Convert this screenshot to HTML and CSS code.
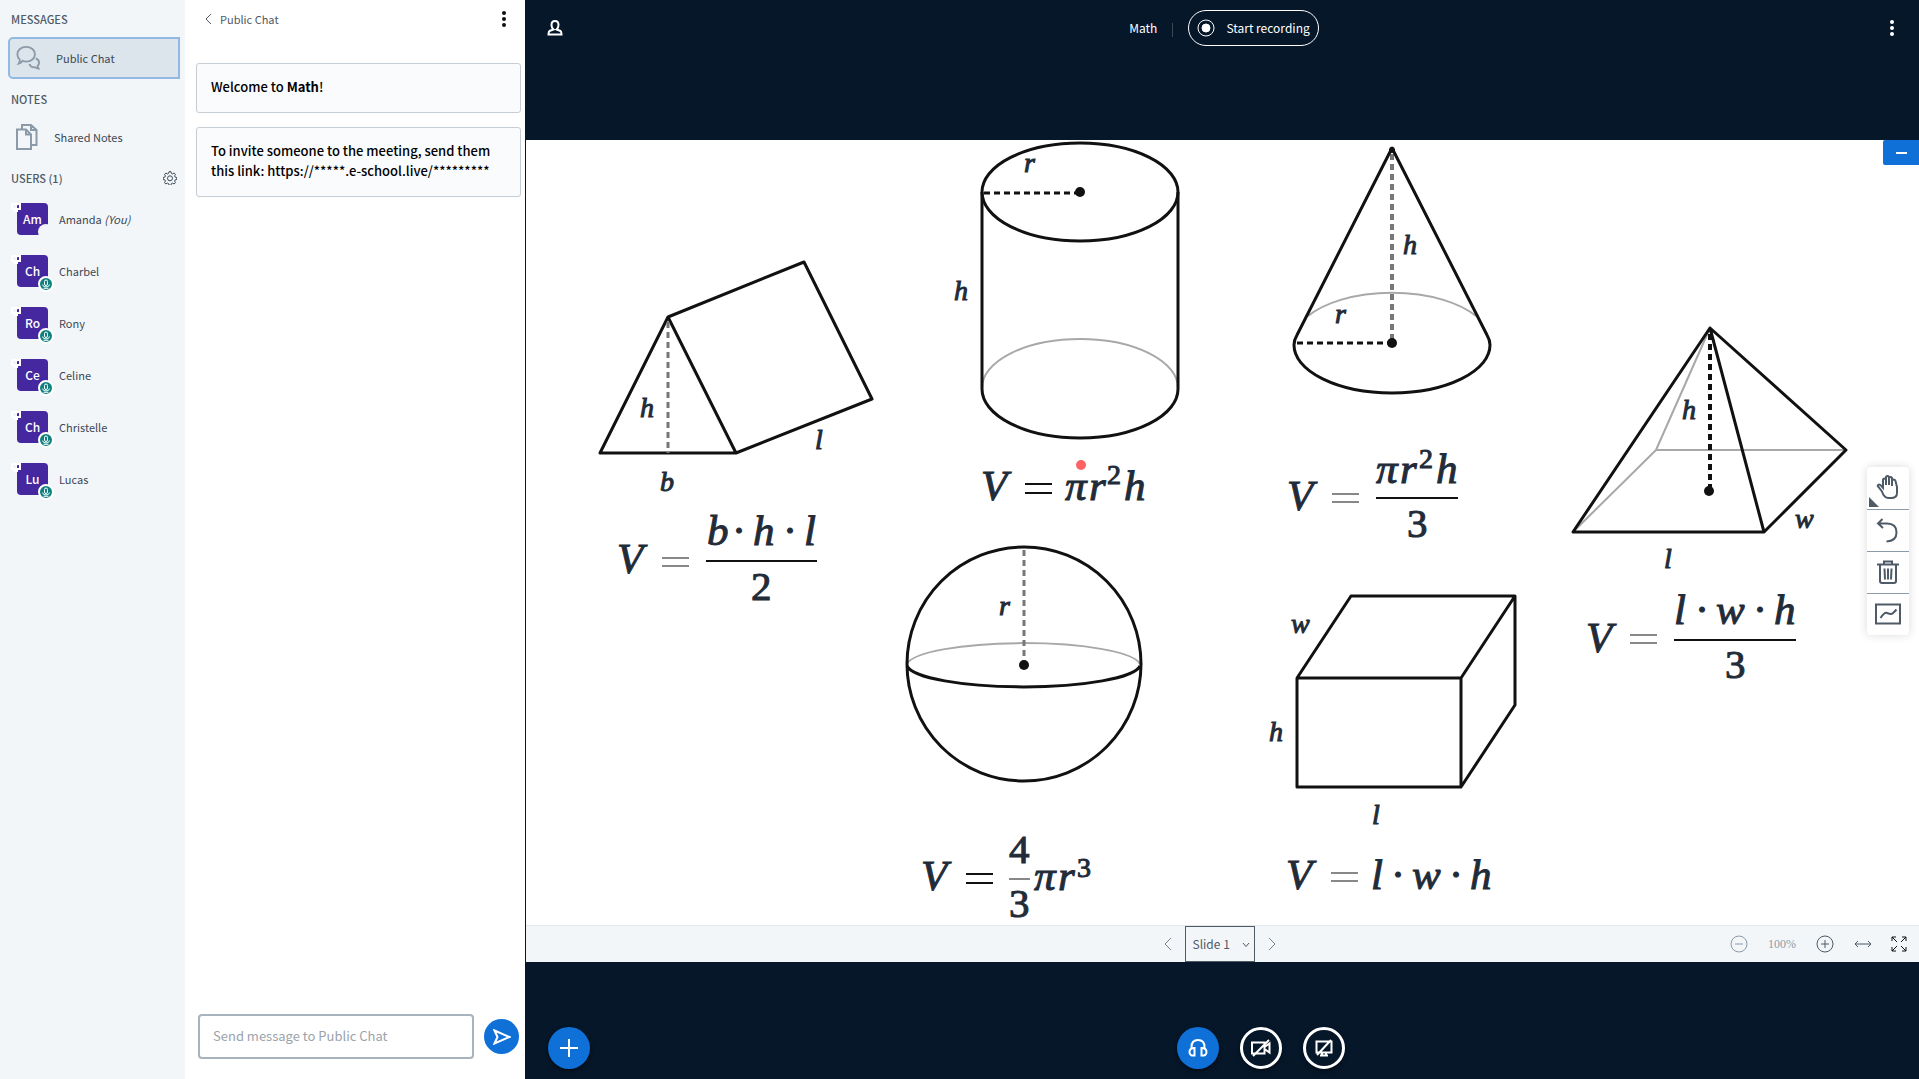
FILE: index.html
```html
<!DOCTYPE html>
<html lang="en">
<head>
  <meta charset="UTF-8">
  <meta name="viewport" content="width=device-width, initial-scale=1.0">
  <title>Math</title>
  <link rel="stylesheet" href="styles.css">
</head>
<body>
  <svg width="0" height="0" class="defs" aria-hidden="true">
    <symbol id="mic" viewBox="0 0 12 12">
      <path d="M4.500 6V3.500Q4.500 2 6 2t1.500 1.500V6Q7.500 7.500 6 7.500T4.500 6zM2.500 6.500Q3 9 6 9t3.500-2.500M3.500 10.300h5"/>
    </symbol>
    <symbol id="screen" viewBox="0 0 10 9">
      <path d="M1 1h8v5H1zM3 8h4"/>
    </symbol>
    <symbol id="dots" viewBox="0 0 6 18">
      <circle cx="3" cy="3" r="2"/><circle cx="3" cy="9" r="2"/><circle cx="3" cy="15" r="2"/>
    </symbol>
  </svg>

  <aside class="sidebar">
    <h2>Messages</h2>
    <button class="side-item active">
      <svg width="26" height="26" viewBox="0 0 26 26">
        <path d="M11 1c5.500 0 9.500 3.500 9.500 8s-4 8-9.500 8q-2 0-4-.8Q5.500 18.500 3 19q1.500-2 1-4.500Q1.500 12.500 1.500 9c0-4.500 4-8 9.500-8z"/>
        <path d="M21.500 13.500q3.500 1.500 3.500 4.500 0 2-1.500 3.500 0 2 1 3-2.500 0-3.500-1.500-5 .8-6.500-3.500"/>
      </svg>
      Public Chat
    </button>
    <h2>Notes</h2>
    <button class="side-item">
      <svg width="24" height="26" viewBox="0 0 24 26">
        <path d="M1 5.500h9l5 5V25H1zM10 5.500v5h5M6 5.500V1h9l5.500 5v15H15M15 1v5h5.500"/>
      </svg>
      Shared Notes
    </button>
    <div class="users-head">
      <h2>Users (1)</h2>
      <button class="icon-btn" aria-label="Manage users">
        <svg width="14" height="14" viewBox="0 0 14 14">
          <path d="M6 .7h2l.4 1.700 1.200.5 1.500-.9 1.400 1.400-.9 1.500.5 1.200 1.700.4v2l-1.700.4-.5 1.200.9 1.500-1.400 1.400-1.500-.9-1.200.5-.4 1.700H6l-.4-1.700-1.200-.5-1.500.9-1.400-1.400.9-1.500-.5-1.200L.2 8.500v-2l1.700-.4.5-1.200-.9-1.500L2.900 2l1.500.9 1.200-.5z"/>
          <circle cx="7" cy="7.300" r="2.500"/>
        </svg>
      </button>
    </div>
    <ul class="users">
      <li><span class="avatar">Am<svg class="presenter"><use href="#screen"/></svg><i class="notch"></i></span>Amanda&nbsp;<em>(You)</em></li>
      <li><span class="avatar">Ch<svg class="presenter"><use href="#screen"/></svg><svg class="voice"><use href="#mic"/></svg></span>Charbel</li>
      <li><span class="avatar">Ro<svg class="presenter"><use href="#screen"/></svg><svg class="voice"><use href="#mic"/></svg></span>Rony</li>
      <li><span class="avatar">Ce<svg class="presenter"><use href="#screen"/></svg><svg class="voice"><use href="#mic"/></svg></span>Celine</li>
      <li><span class="avatar">Ch<svg class="presenter"><use href="#screen"/></svg><svg class="voice"><use href="#mic"/></svg></span>Christelle</li>
      <li><span class="avatar">Lu<svg class="presenter"><use href="#screen"/></svg><svg class="voice"><use href="#mic"/></svg></span>Lucas</li>
    </ul>
  </aside>

  <section class="chat">
    <header>
      <button class="back">
        <svg width="7" height="12" viewBox="0 0 7 12"><path d="M6 1L1 6l5 5"/></svg>
        Public Chat
      </button>
      <button class="icon-btn" aria-label="Chat options"><svg class="dots" width="6" height="18"><use href="#dots"/></svg></button>
    </header>
    <div class="messages">
      <p>Welcome to <b>Math</b>!</p>
      <p>To invite someone to the meeting, send them this link: https://*****.e-school.live/*********</p>
    </div>
    <form class="composer">
      <input type="text" aria-label="Message" placeholder="Send message to Public Chat">
      <button type="submit" class="round send" aria-label="Send">
        <svg width="18" height="16" viewBox="0 0 18 16"><path d="M1.500 1.500L16.500 8l-15 6.500L4.500 8z"/></svg>
      </button>
    </form>
  </section>

  <main>
    <nav class="topbar">
      <button class="icon-btn" aria-label="Toggle user list">
        <svg width="16" height="18" viewBox="0 0 16 18"><path d="M8 2q3.500 0 3.500 4 0 3-2 4.500l4 1.500q1 .8 1 3.500h-13q0-2.700 1-3.500l4-1.500Q4.500 9 4.500 6q0-4 3.500-4z"/></svg>
      </button>
      <div class="title">
        <span class="room">Math</span>
        <button class="record">
          <svg width="18" height="18" viewBox="0 0 18 18"><circle cx="9" cy="9" r="8"/><circle class="fill" cx="9" cy="9" r="4"/></svg>
          Start recording
        </button>
      </div>
      <button class="icon-btn" aria-label="Options"><svg class="dots" width="6" height="18"><use href="#dots"/></svg></button>
    </nav>

    <div class="presentation">
      <svg class="slide" viewBox="526 140 1393 785" preserveAspectRatio="xMidYMid meet">
        <!-- prism -->
        <g class="shape">
          <path d="M600 453L668 317l68 136zM668 317l136-55 68 137-136 54"/>
          <path class="dash soft" d="M668 322v131"/>
        </g>
        <g class="label">
          <text x="640" y="417">h</text><text x="815" y="449">l</text><text x="660" y="491">b</text>
        </g>
        <g class="formula">
          <text x="617" y="573">V</text>
          <text x="707" y="545">b</text><text x="733" y="545">·</text><text x="753" y="545">h</text><text x="784" y="545">·</text><text x="804" y="545">l</text>
          <text class="num" x="751" y="600">2</text>
          <path class="light" d="M662 558h27M662 566h27"/><path d="M706 561h111"/>
        </g>

        <!-- cylinder -->
        <g class="shape">
          <path class="back-line" d="M982 388a98 49 0 0 1 196 0"/>
          <ellipse cx="1080" cy="192" rx="98" ry="49"/>
          <path d="M982 192v197a98 49 0 0 0 196 0V192"/>
          <path class="dash" d="M984 193h96"/>
          <circle class="dot" cx="1080" cy="192" r="5"/>
        </g>
        <g class="label">
          <text x="1024" y="172">r</text><text x="954" y="300">h</text>
        </g>
        <g class="formula">
          <text x="981" y="500">V</text>
          <text x="1065" y="500">π</text><text x="1089" y="500">r</text><text class="sup" x="1107" y="484">2</text><text x="1124" y="500">h</text>
          <path d="M1025 484h27M1025 493h27"/>
        </g>
        <circle class="pointer" cx="1081" cy="465" r="5"/>

        <!-- cone -->
        <g class="shape">
          <path class="back-line" d="M1308 316a98 48 0 0 1 168 0"/>
          <path class="dash soft wide" d="M1392 154v188"/>
          <path d="M1392 148l-95 187q-3 5-3 10a98 48 0 0 0 196 0q0-5-3-10z"/>
          <path class="dash" d="M1297 343h95"/>
          <circle class="dot" cx="1392" cy="343" r="5"/>
          <circle class="dot" cx="1392" cy="150" r="3"/>
        </g>
        <g class="label">
          <text x="1403" y="254">h</text><text x="1335" y="323">r</text>
        </g>
        <g class="formula">
          <text x="1287" y="510">V</text>
          <text x="1376" y="483">π</text><text x="1400" y="483">r</text><text class="sup" x="1419" y="468">2</text><text x="1436" y="483">h</text>
          <text class="num" x="1407" y="537">3</text>
          <path class="light" d="M1332 494h27M1332 502h27"/><path d="M1376 498h82"/>
        </g>

        <!-- pyramid -->
        <g class="shape">
          <path class="back-line" d="M1710 328l-54 122-83 82M1656 450h190"/>
          <path d="M1710 328l-137 204h191zM1710 328l136 122-82 82"/>
          <path class="dash wide" d="M1710 334v156"/>
          <circle class="dot" cx="1709" cy="491" r="5"/>
        </g>
        <g class="label">
          <text x="1682" y="419">h</text><text x="1795" y="528">w</text><text x="1664" y="568">l</text>
        </g>
        <g class="formula">
          <text x="1586" y="652">V</text>
          <text x="1674" y="624">l</text><text x="1696" y="624">·</text><text x="1716" y="624">w</text><text x="1754" y="624">·</text><text x="1774" y="624">h</text>
          <text class="num" x="1725" y="678">3</text>
          <path class="light" d="M1630 635h27M1630 643h27"/><path d="M1674 640h122"/>
        </g>

        <!-- sphere -->
        <g class="shape">
          <path class="back-line" d="M907 664a117 23 0 0 1 233 0"/>
          <circle cx="1024" cy="664" r="117"/>
          <path d="M907 666a117 23 0 0 0 233 0"/>
          <path class="dash soft" d="M1024 550v114"/>
          <circle class="dot" cx="1024" cy="665" r="5"/>
        </g>
        <g class="label"><text x="999" y="615">r</text></g>
        <g class="formula">
          <text x="921" y="890">V</text>
          <text class="num" x="1009" y="863">4</text><text class="num" x="1009" y="917">3</text>
          <text x="1034" y="890">π</text><text x="1058" y="890">r</text><text class="sup" x="1077" y="877">3</text>
          <path d="M966 874h27M966 883h27"/><path class="light" d="M1009 879h21"/>
        </g>

        <!-- box -->
        <g class="shape">
          <path d="M1297 678h164v109h-164zM1297 678l54-82h164l-54 82M1515 596v109l-54 82"/>
        </g>
        <g class="label">
          <text x="1291" y="633">w</text><text x="1269" y="741">h</text><text x="1372" y="824">l</text>
        </g>
        <g class="formula">
          <text x="1286" y="889">V</text>
          <text x="1371" y="889">l</text><text x="1392" y="889">·</text><text x="1412" y="889">w</text><text x="1450" y="889">·</text><text x="1470" y="889">h</text>
          <path class="light" d="M1331 873h27M1331 881h27"/>
        </g>
      </svg>

      <button class="minimize" aria-label="Minimize presentation"><svg width="11" height="2" viewBox="0 0 11 2"><path d="M0 1h11"/></svg></button>

      <div class="tools">
        <button class="more" aria-label="Pan">
          <svg width="24" height="26" viewBox="0 0 24 26"><path d="M6 17.500L2.500 13Q1 11.500 2.300 10.800t3 1l1.700 2V6q0-1.500 1.500-1.500T10 6v5V3.500Q10 2 11.500 2T13 3.500V11 4.500Q13 3 14.500 3T16 4.500V12 7q0-1.500 1.500-1.500T19.500 7l1.500 6v6q0 5-6 5h-2.500q-4.500 0-6.500-6.500z"/></svg>
        </button>
        <button aria-label="Undo">
          <svg width="24" height="26" viewBox="0 0 24 26"><path d="M6.500 2L2 6.500 7 11M2 6.500h9q9.500 0 9.500 9 0 8.500-10 9"/></svg>
        </button>
        <button aria-label="Clear all">
          <svg width="24" height="26" viewBox="0 0 24 26"><path d="M1 5.500h22M8 5V2.500h8V5M4 5.500V22q0 2 2 2h12q2 0 2-2V5.500M8.500 9.500l.5 11M12 9.500v11M15.500 9.500l-.5 11"/></svg>
        </button>
        <button aria-label="Multi-user whiteboard">
          <svg width="26" height="22" viewBox="0 0 26 22"><path d="M1 1.500h24v19H1zM5.500 15q4-6 6.500-5t4 1 5.500-4.500"/></svg>
        </button>
      </div>

      <div class="slide-bar">
        <div class="pager">
          <button class="icon-btn" aria-label="Previous slide"><svg width="8" height="14" viewBox="0 0 8 14"><path d="M7 1L1 7l6 6"/></svg></button>
          <label class="picker">
            <select aria-label="Slide"><option>Slide 1</option></select>
            <svg width="8" height="6" viewBox="0 0 8 6"><path d="M1 1l3 3.500L7 1"/></svg>
          </label>
          <button class="icon-btn" aria-label="Next slide"><svg width="8" height="14" viewBox="0 0 8 14"><path d="M1 1l6 6-6 6"/></svg></button>
        </div>
        <div class="zoom">
          <button class="icon-btn faded" aria-label="Zoom out"><svg width="18" height="18" viewBox="0 0 18 18"><circle cx="9" cy="9" r="8"/><path d="M5 9h8"/></svg></button>
          <span class="percent">100%</span>
          <button class="icon-btn" aria-label="Zoom in"><svg width="18" height="18" viewBox="0 0 18 18"><circle cx="9" cy="9" r="8"/><path d="M5 9h8M9 5v8"/></svg></button>
          <button class="icon-btn" aria-label="Fit to width"><svg width="18" height="18" viewBox="0 0 18 18"><path d="M1 9h16M4 6L1 9l3 3M14 6l3 3-3 3"/></svg></button>
          <button class="icon-btn full" aria-label="Fullscreen"><svg width="18" height="18" viewBox="0 0 18 18"><path d="M2 6V2h4M2 2l5 5M12 2h4v4M16 2l-5 5M2 12v4h4M2 16l5-5M16 12v4h-4M16 16l-5-5"/></svg></button>
        </div>
      </div>
    </div>

    <footer class="actions">
      <button class="round" aria-label="Actions"><svg width="20" height="20" viewBox="0 0 20 20"><path d="M10 1v18M1 10h18"/></svg></button>
      <div class="media">
        <button class="round" aria-label="Leave audio">
          <svg width="20" height="18" viewBox="0 0 20 18"><path d="M3.500 9V8q0-7 6.500-7t6.500 7v1M6.500 9v7.500Q1.500 17 1.500 13t5-4zM13.500 9v7.500q5 .5 5-3.500t-5-4z"/></svg>
        </button>
        <button class="round hollow" aria-label="Share webcam">
          <svg width="20" height="18" viewBox="0 0 20 18"><path d="M1 3.500h12.500v11H1zM13.500 8l5-3.500v9l-5-3.500M2 17L18 1"/></svg>
        </button>
        <button class="round hollow" aria-label="Share screen">
          <svg width="18" height="18" viewBox="0 0 18 18"><path d="M1.500 2.500h15v11h-15zM5 16.500h8M7 13.500v3M11 13.500v3M2 16L16 1"/></svg>
        </button>
      </div>
    </footer>
  </main>
</body>
</html>
```

FILE: styles.css
```css
* {
  box-sizing: border-box;
}
body {
  display: grid;
  grid-template-columns: 185px 340px 1fr;
  height: 100vh;
  margin: 0;
  overflow: hidden;
  font-family: "Noto Sans CJK SC", "Noto Sans", sans-serif;
  font-size: 11px;
  line-height: 20px;
  color: #3b4854;
  background-color: white;
}
.defs {
  position: absolute;
}
button, input, select {
  font: inherit;
  color: inherit;
}
button {
  display: flex;
  align-items: center;
  justify-content: center;
  padding: 0;
  border: none;
  background: none;
  cursor: pointer;
}
svg {
  flex: none;
  fill: none;
  stroke: currentColor;
}

/* user list */
.sidebar {
  padding: 9px 5px 0 8px;
  background-color: #f3f6f9;
}
h2 {
  margin: 0 0 0 3px;
  font-size: 11px;
  font-weight: 500;
  line-height: 20px;
  text-transform: uppercase;
  color: #4e5a66;
}
.side-item {
  justify-content: flex-start;
  gap: 14px;
  width: 100%;
  height: 42px;
  margin: 7px 0 10px;
  padding-left: 8px;
}
.side-item svg {
  width: 24px;
  stroke: #8b9aa8;
  stroke-width: 2;
}
.side-item.active {
  gap: 16px;
  margin: 9px 0 11px;
  border: 2px solid #92b9e3;
  border-radius: 5px 0 0 5px;
  padding-left: 6px;
  background-color: #dce4ec;
}
.side-item.active {
  margin: 8px 0 10px;
}
.users-head {
  display: flex;
  justify-content: space-between;
  padding-right: 3px;
}
.users {
  margin: 5px 0 0;
  padding: 0;
  list-style: none;
}
.users li {
  display: flex;
  align-items: center;
  height: 52px;
  padding-left: 9px;
}
.avatar {
  position: relative;
  display: flex;
  align-items: center;
  justify-content: center;
  width: 31px;
  height: 32px;
  margin-right: 11px;
  border-radius: 4px;
  background-color: #4527a0;
  color: white;
  font-size: 12px;
  font-weight: 500;
}
.presenter {
  position: absolute;
  top: 0;
  left: -6px;
  width: 10px;
  height: 9px;
  stroke: white;
  stroke-width: 2;
}
.notch, .voice {
  position: absolute;
  right: -6px;
  bottom: -5px;
  width: 16px;
  height: 16px;
  border-radius: 50%;
}
.notch {
  background-color: #f3f6f9;
}
.voice {
  border: 2px solid white;
  background-color: #0f8080;
}

/* chat */
.chat {
  display: flex;
  flex-direction: column;
  padding: 9px 4px 20px 11px;
}
.chat header {
  display: flex;
  justify-content: space-between;
  padding: 0 14px 0 9px;
  color: #4e5a66;
}
.back {
  gap: 8px;
}
.dots {
  fill: currentColor;
  stroke: none;
}
.chat .dots {
  color: #111;
}
.messages {
  flex: 1;
  margin-top: 34px;
}
.messages p {
  margin: 0 0 14px;
  padding: 13px 14px 15px;
  border: 1px solid #c5cdd4;
  border-radius: 3px;
  background-color: #fafbfd;
  color: black;
  font-size: 13px;
  font-weight: 500;
}
.messages b {
  font-weight: 700;
}
.composer {
  display: flex;
  align-items: center;
  gap: 10px;
  padding: 0 2px;
}
.composer input {
  flex: 1;
  min-width: 0;
  height: 45px;
  padding: 0 13px 2px;
  border: 2px solid #a7b3bd;
  border-radius: 4px;
  font-size: 13px;
}
.composer input::placeholder {
  color: #9ba3ab;
}
.round {
  width: 42px;
  height: 42px;
  border-radius: 50%;
  background-color: #0f70d7;
  color: white;
  box-shadow: 0 2px 4px rgba(0, 0, 0, 0.5);
}
.round svg {
  stroke-width: 2;
}
.send {
  width: 35px;
  height: 35px;
  box-shadow: none;
}
.round.hollow {
  border: 3px solid white;
  background-color: transparent;
}

/* meeting area */
main {
  display: flex;
  flex-direction: column;
  min-width: 0;
  padding-left: 1px;
  background-color: #06172a;
  color: white;
}
.topbar {
  display: flex;
  align-items: center;
  justify-content: space-between;
  height: 56px;
  margin-bottom: 84px;
  padding: 0 24px 0 21px;
  font-size: 12px;
}
.topbar svg {
  stroke-width: 2;
}
.title {
  display: flex;
  align-items: center;
  padding-right: 4px;
}
.room {
  margin-right: 15px;
}
.room::after {
  content: "";
  display: inline-block;
  height: 14px;
  margin-left: 15px;
  border-left: 1px solid #3a4857;
  vertical-align: middle;
}
.record {
  gap: 11px;
  height: 36px;
  padding: 0 8px;
  border: 1px solid white;
  border-radius: 18px;
}
.record svg {
  stroke-width: 1;
}
.fill, .dot {
  fill: currentColor;
  }
.dot {
  stroke: none;
}
.presentation {
  position: relative;
  display: flex;
  flex: 1;
  flex-direction: column;
  min-height: 0;
  background-color: white;
}
.slide {
  flex: 1;
  width: 100%;
  min-height: 0;
  color: #111;
}
.shape {
  stroke-width: 3;
  stroke-linejoin: round;
}
.back-line {
  stroke: #a8a8a8;
  stroke-width: 2;
}
.dash {
  stroke-width: 3;
  stroke-dasharray: 6 4;
}
.dash.soft {
  stroke: #777;
}
.dash.wide {
  stroke-width: 4;
}
.label, .formula {
  font-family: "Liberation Serif", serif;
  font-style: italic;
}
.label text, .formula text {
  fill: #222b38;
  stroke: #222b38;
  stroke-width: 1;
}
.label {
  font-size: 28px;
}
.formula {
  font-size: 43px;
  stroke-width: 2;
}
.formula .light {
  stroke: #888;
}
.num, .sup {
  font-style: normal;
}
.num {
  font-size: 41px;
}
.sup {
  font-size: 28px;
}
.pointer {
  fill: #ff6262;
  stroke: none;
}
.minimize {
  position: absolute;
  top: 0;
  right: 0;
  width: 36px;
  height: 25px;
  border-radius: 2px 0 0 2px;
  background-color: #0f70d7;
  color: white;
}
.minimize svg {
  stroke-width: 2;
}
.tools {
  position: absolute;
  top: 327px;
  right: 10px;
  border-radius: 4px;
  background-color: white;
  color: #4e5a66;
  box-shadow: 0 0 10px rgba(0, 0, 0, 0.15);
}
.tools button {
  width: 42px;
  height: 42px;
  padding-bottom: 2px;
}
.tools svg {
  stroke-width: 2;
}
.tools button + button {
  border-top: 1px solid #8b9aa8;
}
.more {
  position: relative;
}
.more::before {
  content: "";
  position: absolute;
  left: 2px;
  bottom: 2px;
  border-left: 10px solid #4e5a66;
  border-top: 10px solid transparent;
}
.slide-bar {
  display: grid;
  grid-template-columns: 1fr auto 1fr;
  align-items: center;
  height: 37px;
  border-top: 1px solid #e4e8eb;
  background-color: #f3f6f9;
  color: #4e5a66;
}
.pager {
  display: flex;
  grid-column: 2;
  align-items: center;
  gap: 13px;
  padding-right: 6px;
}
.pager .icon-btn {
  color: #76838f;
}
.picker {
  position: relative;
}
.picker select {
  display: block;
  width: 70px;
  height: 36px;
  padding: 0 7px;
  border: 1px solid #4e5a66;
  border-radius: 0;
  appearance: none;
  background-color: #f3f6f9;
  font-size: 12px;
}
.picker svg {
  position: absolute;
  top: 16px;
  right: 5px;
}
.zoom {
  display: flex;
  align-items: center;
  justify-content: flex-end;
  gap: 20px;
  padding-right: 11px;
}
.faded, .percent {
  color: #8b9aa8;
}
.percent {
  font-family: "Liberation Serif", serif;
  font-size: 12px;
}
.full {
  margin-left: -2px;
  color: #111;
}
.actions {
  display: grid;
  grid-template-columns: 1fr auto 1fr;
  margin-top: 65px;
  padding: 0 22px 10px;
}
.media {
  display: flex;
  gap: 21px;
  margin-left: 76px;
}
```
